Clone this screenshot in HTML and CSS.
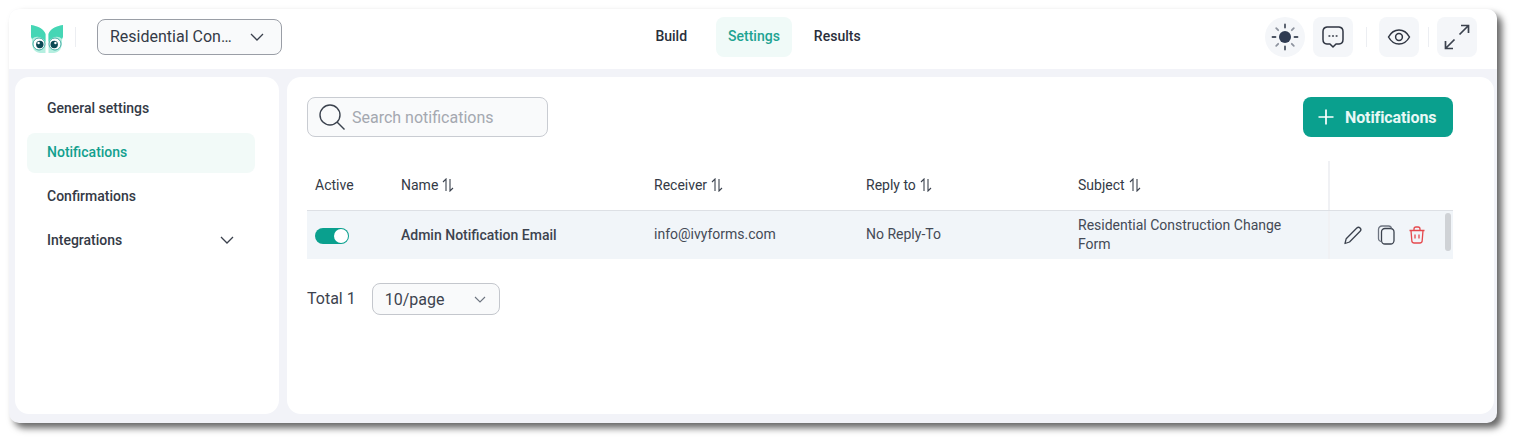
FILE: index.html
```html
<!DOCTYPE html>
<html lang="en">
<head>
<meta charset="utf-8">
<title>Notifications</title>
<link rel="stylesheet" href="styles.css">
</head>
<body>
<div class="window">
  <header class="topbar">
    <div class="top-left">
      <svg class="logo" width="34" height="28" viewBox="0 0 34 28">
        <path d="M1 0C8 1 14 4 15.500 9V28H10C4 27 2 23 2 17Z" fill="#b5efe0"/>
        <path d="M33 0C26 1 20 4 18.500 9V28H24C30 27 32 23 32 17Z" fill="#b5efe0"/>
        <path d="M1 0C8 1 14 4 15.500 9V17C13 12 6 10 2 14L1 12Z" fill="#45d6b5"/>
        <path d="M33 0C26 1 20 4 18.500 9V17C21 12 28 10 32 14L33 12Z" fill="#45d6b5"/>
        <circle cx="9" cy="19" r="6" fill="#fff" stroke="#1f9c92" stroke-width=".8"/>
        <circle cx="9.800" cy="19.500" r="3.700" fill="#0c4a55"/>
        <circle cx="25" cy="19" r="6" fill="#fff" stroke="#1f9c92" stroke-width=".8"/>
        <circle cx="24.200" cy="19.500" r="3.700" fill="#0c4a55"/>
        <circle cx="8.600" cy="18" r="1.200" fill="#fff"/>
        <circle cx="25.400" cy="18" r="1.200" fill="#fff"/>
      </svg>
      <span class="vsep logo-sep"></span>
      <button class="form-select">
        <span class="lift">Residential Con…</span>
        <svg width="14" height="8" viewBox="0 0 14 8"><path d="M1 1l6 6 6-6" fill="none" stroke="#3a404c" stroke-width="1.300"/></svg>
      </button>
    </div>
    <nav class="tabs">
      <a class="tab">Build</a>
      <a class="tab tab-active">Settings</a>
      <a class="tab">Results</a>
    </nav>
    <div class="top-right">
      <button class="icon-btn round">
        <svg width="28" height="28" viewBox="0 0 28 28"><circle cx="14" cy="14" r="6" fill="#2f3b52"/><g stroke="#4d5563" stroke-width="1.800" stroke-linecap="round"><path d="M14 1.500v3M14 23.500v3M1.500 14h3M23.500 14h3"/></g><g stroke="#8d939e" stroke-width="1.800" stroke-linecap="round"><path d="M5.200 5.200l2 2M20.800 20.800l2 2M5.200 22.800l2-2M20.800 7.200l2-2"/></g></svg>
      </button>
      <button class="icon-btn">
        <svg width="24" height="24" viewBox="0 0 24 24"><path d="M6 2h12a4.500 4.500 0 0 1 4 4.500v8a4.500 4.500 0 0 1-4 4.500h-3l-3 3-3-3H6a4.500 4.500 0 0 1-4-4.500v-8A4.500 4.500 0 0 1 6 2z" fill="none" stroke="#2f3542" stroke-width="1.500" stroke-linejoin="round"/><path d="M8 11h.8M11.600 11h.8M15.200 11h.8" stroke="#2f3542" stroke-width="1.400" stroke-linecap="round"/></svg>
      </button>
      <span class="vsep sep-a"></span>
      <button class="icon-btn">
        <svg width="24" height="24" viewBox="0 0 24 24"><path d="M1.500 12C4 7.500 7.800 5 12 5s8 2.500 10.500 7C20 16.500 16.200 19 12 19S4 16.500 1.500 12z" fill="none" stroke="#2f3542" stroke-width="1.500"/><circle cx="12" cy="12" r="3.400" fill="none" stroke="#2f3542" stroke-width="1.500"/></svg>
      </button>
      <span class="vsep sep-b"></span>
      <button class="icon-btn">
        <svg width="26" height="26" viewBox="0 0 26 26"><path d="M15.500 10.500l9-9M17 1.500h7.500V9M10.500 15.500l-9 9M1.500 17v7.500H9" fill="none" stroke="#3b424e" stroke-width="1.700"/></svg>
      </button>
    </div>
  </header>
  <div class="content">
    <aside class="sidebar">
      <a class="side-item">General settings</a>
      <a class="side-item side-active">Notifications</a>
      <a class="side-item">Confirmations</a>
      <a class="side-item side-expand">Integrations
        <svg width="14" height="8" viewBox="0 0 14 8"><path d="M1 1l6 6 6-6" fill="none" stroke="#3a404c" stroke-width="1.300"/></svg>
      </a>
    </aside>
    <main class="panel">
      <div class="toolbar">
        <label class="search">
          <svg width="28" height="28" viewBox="0 0 28 28"><circle cx="12" cy="12" r="10" fill="none" stroke="#3b424e" stroke-width="1.400"/><path d="M19 19l7.500 7.500" stroke="#3b424e" stroke-width="1.400"/></svg>
          <span class="placeholder">Search notifications</span>
        </label>
        <button class="primary">
          <svg width="16" height="16" viewBox="0 0 16 16"><path d="M8 .5v15M.5 8h15" stroke="#fff" stroke-width="1.700"/></svg>
          <span>Notifications</span>
        </button>
      </div>
      <div class="table">
        <div class="row head">
          <div class="cell first">Active</div>
          <div class="cell">Name <svg class="sort" width="12" height="14" viewBox="0 0 12 14"><path d="M1 4l3-3v12M8 1v12l3-3" fill="none" stroke="#3b424e" stroke-width="1.100"/></svg></div>
          <div class="cell">Receiver <svg class="sort" width="12" height="14" viewBox="0 0 12 14"><path d="M1 4l3-3v12M8 1v12l3-3" fill="none" stroke="#3b424e" stroke-width="1.100"/></svg></div>
          <div class="cell">Reply to <svg class="sort" width="12" height="14" viewBox="0 0 12 14"><path d="M1 4l3-3v12M8 1v12l3-3" fill="none" stroke="#3b424e" stroke-width="1.100"/></svg></div>
          <div class="cell">Subject <svg class="sort" width="12" height="14" viewBox="0 0 12 14"><path d="M1 4l3-3v12M8 1v12l3-3" fill="none" stroke="#3b424e" stroke-width="1.100"/></svg></div>
          <div class="cell actions"></div>
        </div>
        <div class="row body">
          <div class="cell first"><span class="toggle"><span class="knob"></span></span></div>
          <div class="cell strong">Admin Notification Email</div>
          <div class="cell raised">info@ivyforms.com</div>
          <div class="cell raised">No Reply-To</div>
          <div class="cell subject">Residential Construction Change Form</div>
          <div class="cell actions">
            <svg width="20" height="20" viewBox="0 0 20 20"><path d="M2 18.500l1.200-4.800L13.800 3a2.300 2.300 0 0 1 3.300 3.300L6.500 17z M2 18.500l4.500-1.500" fill="none" stroke="#3b424e" stroke-width="1.300" stroke-linejoin="round"/></svg>
            <svg width="18" height="20" viewBox="0 0 18 20"><rect x="4.500" y="3.500" width="12.500" height="15.500" rx="3.500" fill="none" stroke="#3b424e" stroke-width="1.300"/><path d="M4.500 16.500A3 3 0 0 1 1.500 13.500V4.500A3.500 3.500 0 0 1 5 1h6.500a3 3 0 0 1 3 2.500" fill="none" stroke="#6d7480" stroke-width="1.300"/></svg>
            <svg width="16" height="18" viewBox="0 0 16 18"><path d="M.5 4.500h15M5 4.500V3a2 2 0 0 1 2-2h2a2 2 0 0 1 2 2v1.500M2 4.500l.8 10a2.500 2.500 0 0 0 2.500 2.500h5.400a2.500 2.500 0 0 0 2.500-2.500l.8-10M6 8.500v4M10 8.500v4" fill="none" stroke="#e5484d" stroke-width="1.300"/></svg>
            <span class="thumb"></span>
          </div>
        </div>
      </div>
      <div class="pager">
        <span class="total">Total 1</span>
        <button class="page-select">
          <span>10/page</span>
          <svg width="12" height="7" viewBox="0 0 12 7"><path d="M1 1l5 5 5-5" fill="none" stroke="#6d7480" stroke-width="1.100"/></svg>
        </button>
      </div>
    </main>
  </div>
</div>
</body>
</html>
```

FILE: styles.css
```css
* { box-sizing: border-box; }
html, body { margin: 0; height: 100%; background: #fff; }
body { padding: 9px 21px 21px 9px; font-family: Roboto, "Liberation Sans", sans-serif; color: #2f3542; overflow: hidden; }
button { font: inherit; color: inherit; cursor: pointer; }

.window {
  width: 1488px; height: 414px; background: #f2f3f8; border-radius: 10px;
  display: flex; flex-direction: column;
  box-shadow: 5px 5px 7px rgba(0,0,0,.6);
}

.topbar {
  height: 60px; flex: none; background: #fff; border-radius: 10px 10px 0 0;
  display: grid; grid-template-columns: 1fr auto 1fr; align-items: center;
  padding: 0 20px 4px 21px;
}
.top-left { display: flex; align-items: center; }
.logo { flex: none; margin-top: 4px; }
.vsep { width: 1px; height: 20px; background: #eceef2; flex: none; }
.logo-sep { margin: 0 21px 0 11px; }
.form-select {
  width: 185px; height: 36px; border: 1px solid #9a9ea6; border-radius: 8px; background: #f9fafb;
  display: flex; align-items: center; justify-content: space-between; padding: 0 17px 0 12px;
  font-size: 16px; color: #343a46;
}
.lift { padding-bottom: 2px; }
.tabs { display: flex; font-size: 14px; font-weight: 500; position: relative; left: 3.5px; }
.tab { height: 40px; display: flex; align-items: center; padding: 0 12px 2px; border-radius: 8px; margin-right: -2px; color: #2a2f3b; }
.tab-active { background: #f0faf8; color: #1ea392; margin: 0 10px 0 19px; }
.top-right { display: flex; align-items: center; justify-content: flex-end; }
.icon-btn { width: 40px; height: 40px; border: 0; border-radius: 8px; background: #f4f6f9; display: flex; align-items: center; justify-content: center; padding: 0; }
.icon-btn.round { border-radius: 50%; margin-right: 8px; }
.sep-a { margin: 0 12px 0 13px; }
.sep-b { margin: 0 8px 0 9px; }

.content { flex: 1; min-height: 0; display: flex; gap: 8px; padding: 8px 3px 9px 6px; }

.sidebar { width: 264px; flex: none; background: #fff; border-radius: 14px; padding: 12px 24px 0 12px; display: flex; flex-direction: column; gap: 4px; }
.side-item { height: 40px; display: flex; align-items: center; padding: 0 20px 2px; border-radius: 8px; font-size: 14px; font-weight: 500; color: #343a46; }
.side-active { background: #f2faf8; color: #12a08e; }
.side-expand { justify-content: space-between; padding-right: 21px; }

.panel { flex: 1; min-width: 0; background: #fff; border-radius: 14px; padding: 20px 41px 0 20px; }
.toolbar { display: flex; justify-content: space-between; align-items: center; height: 40px; }
.search { width: 241px; height: 40px; border: 1px solid #c9ccd2; border-radius: 8px; background: #f9fafb; display: flex; align-items: center; gap: 6px; padding: 0 0 0 10px; }
.placeholder { color: #a4a8b0; font-size: 16px; }
.primary { width: 150px; height: 40px; border: 0; border-radius: 8px; background: #0aa08e; color: #e8f8f5; font-size: 16px; font-weight: 700; letter-spacing: -.1px; display: flex; align-items: center; gap: 11px; padding: 0 0 0 15px; }

.table { margin-top: 24px; }
.row { display: grid; grid-template-columns: 94px 253px 212px 212px 258px 117px; width: 1146px; }
.head { height: 50px; border-bottom: 1px solid #dde0e5; font-size: 14px; color: #343a46; }
.head .cell { padding-bottom: 2px; }
.body { height: 48px; background: #f1f5f9; font-size: 14px; color: #444a56; }
.cell { display: flex; align-items: center; gap: 4px; padding-right: 8px; }
.raised { padding-bottom: 2px; }
.first { padding-left: 8px; }
.sort { flex: none; margin-top: 1px; }
.strong { font-weight: 500; color: #3d434f; }
.subject { line-height: 19px; padding-right: 30px; }
.actions { border-left: 2px solid #f0f1f4; padding-left: 13px; gap: 14px; position: relative; margin-left: -8px; width: 125px; }
.thumb { position: absolute; right: 2px; top: 2px; width: 6px; height: 38px; border-radius: 3px; background: #cfd2d6; }

.toggle { width: 34px; height: 16px; margin-top: 2px; background: #0aa08e; border-radius: 8px; display: flex; justify-content: flex-end; align-items: center; padding-right: 1px; }
.knob { width: 14px; height: 14px; background: #fff; border-radius: 50%; }

.pager { display: flex; align-items: center; margin-top: 24px; gap: 16px; }
.total { font-size: 16px; color: #3d434f; padding-bottom: 2px; }
.page-select { width: 128px; height: 32px; border: 1px solid #c4c7cd; border-radius: 8px; background: #f9fafb; display: flex; align-items: center; justify-content: space-between; padding: 0 13px 0 12px; font-size: 16px; color: #3d434f; }
```
